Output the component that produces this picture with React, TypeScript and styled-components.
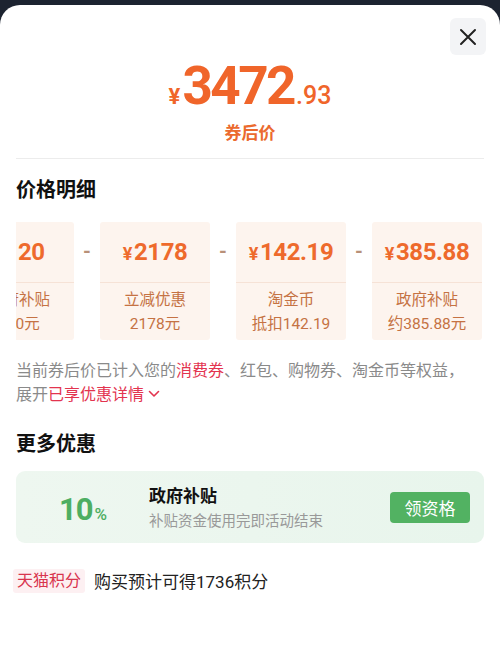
import React from 'react';
import styled, { createGlobalStyle } from 'styled-components';

const GlobalStyle = createGlobalStyle`
  html, body {
    margin: 0;
    padding: 0;
    background: #1c2330;
  }
  body {
    font-family: Roboto, "Noto Sans CJK SC", sans-serif;
  }
  * {
    box-sizing: border-box;
  }
`;

const cards = [
  { price: '120', label: '政府补贴', value: '120元' },
  { price: '2178', label: '立减优惠', value: '2178元' },
  { price: '142.19', label: '淘金币', value: '抵扣142.19' },
  { price: '385.88', label: '政府补贴', value: '约385.88元' },
];

const App = () => {
  return (
    <>
      <GlobalStyle />
      <Sheet>
        <CloseButton aria-label="close">
          <svg width="18" height="18" viewBox="0 0 18 18">
            <path d="M2 2 L16 16 M16 2 L2 16" stroke="#222" strokeWidth="2" strokeLinecap="round" />
          </svg>
        </CloseButton>
        <PriceBlock>
          <BigPrice>
            <Yen>¥</Yen>
            <Integer>3472</Integer>
            <Decimal>.93</Decimal>
          </BigPrice>
          <PriceCaption>券后价</PriceCaption>
        </PriceBlock>
        <Divider />

        <SectionTitle>价格明细</SectionTitle>
        <CardsViewport>
          <CardsRow>
            {cards.map((c, i) => (
              <React.Fragment key={i}>
                {i > 0 && <Dash>-</Dash>}
                <Card>
                  <CardPrice>
                    <CardYen>¥</CardYen>
                    {c.price}
                  </CardPrice>
                  <CardInfo>
                    <CardLine>{c.label}</CardLine>
                    <CardLine>{c.value}</CardLine>
                  </CardInfo>
                </Card>
              </React.Fragment>
            ))}
          </CardsRow>
        </CardsViewport>

        <Note>
          当前券后价已计入您的<Highlight>消费券</Highlight>、红包、购物券、淘金币等权益，展开
          <Highlight>已享优惠详情</Highlight>
          <Chevron width="12" height="8" viewBox="0 0 12 8">
            <path d="M1.5 1.5 L6 6 L10.5 1.5" fill="none" stroke="#e3344f" strokeWidth="1.6" strokeLinecap="round" strokeLinejoin="round" />
          </Chevron>
        </Note>

        <SectionTitle $top={24}>更多优惠</SectionTitle>
        <OfferCard>
          <OfferRate>
            10<Percent>%</Percent>
          </OfferRate>
          <OfferBody>
            <OfferTitle>政府补贴</OfferTitle>
            <OfferSub>补贴资金使用完即活动结束</OfferSub>
          </OfferBody>
          <OfferButton>领资格</OfferButton>
        </OfferCard>

        <PointsRow>
          <PointsTag>天猫积分</PointsTag>
          <PointsText>购买预计可得1736积分</PointsText>
        </PointsRow>
      </Sheet>
    </>
  );
};

export default App;

const Sheet = styled.div`
  position: relative;
  margin-top: 5px;
  min-height: 662px;
  background: #fff;
  border-radius: 20px 20px 0 0;
  padding: 0 16px;
  overflow: hidden;
`;
const CloseButton = styled.div`
  position: absolute;
  top: 13px;
  right: 14px;
  width: 36px;
  height: 37px;
  border-radius: 6px;
  background: #f3f4f6;
  display: flex;
  align-items: center;
  justify-content: center;
`;
const PriceBlock = styled.div`
  display: flex;
  flex-direction: column;
  align-items: center;
  padding-top: 55px;
`;
const BigPrice = styled.div`
  display: flex;
  align-items: baseline;
  color: #f0652a;
  font-family: Roboto, sans-serif;
  font-weight: 700;
  line-height: 1;
`;
const Yen = styled.span`
  font-size: 22px;
  margin-right: 2px;
`;
const Integer = styled.span`
  font-size: 53px;
  letter-spacing: -2.5px;
`;
const Decimal = styled.span`
  font-size: 25px;
  font-weight: 500;
  margin-left: 2px;
`;
const PriceCaption = styled.div`
  margin-top: 8px;
  font-size: 17px;
  font-weight: 700;
  color: #eb6a2e;
  font-family: "Noto Sans CJK SC", sans-serif;
  line-height: 22px;
`;
const Divider = styled.div`
  margin-top: 15px;
  height: 1px;
  background: #ececec;
`;
const SectionTitle = styled.div<{ $top?: number }>`
  margin-top: ${p => p.$top ?? 16}px;
  font-family: "Noto Sans CJK SC", sans-serif;
  font-size: 20px;
  font-weight: 600;
  color: #111;
  line-height: 28px;
`;
const CardsViewport = styled.div`
  margin-top: 19px;
  overflow: hidden;
`;
const CardsRow = styled.div`
  display: flex;
  margin-left: -52px;
`;
const Card = styled.div`
  flex: 0 0 110px;
  height: 118px;
  background: #fdf4ee;
  border-radius: 3px;
  display: flex;
  flex-direction: column;
`;
const CardPrice = styled.div`
  height: 61px;
  border-bottom: 1px solid #f6e2d6;
  display: flex;
  align-items: center;
  justify-content: center;
  color: #ee6a2c;
  font-family: Roboto, sans-serif;
  font-weight: 700;
  font-size: 24px;
  letter-spacing: -0.4px;
`;
const CardYen = styled.span`
  font-size: 18px;
  margin-right: 2px;
  position: relative;
  top: 1px;
`;
const CardInfo = styled.div`
  padding-top: 5px;
  display: flex;
  flex-direction: column;
  align-items: center;
`;
const CardLine = styled.div`
  font-family: Roboto, "Noto Sans CJK SC", sans-serif;
  font-size: 15.5px;
  line-height: 24px;
  color: #c57243;
  white-space: nowrap;
`;
const Dash = styled.div`
  flex: 0 0 26px;
  text-align: center;
  padding-top: 17px;
  font-size: 20px;
  font-weight: 700;
  color: #b89078;
  font-family: Roboto, sans-serif;
`;
const Note = styled.div`
  margin-top: 17px;
  padding-right: 14px;
  font-family: "Noto Sans CJK SC", sans-serif;
  font-size: 16px;
  line-height: 24px;
  color: #8a8a8a;
`;
const Highlight = styled.span`
  color: #e3344f;
`;
const Chevron = styled.svg`
  margin-left: 4px;
  vertical-align: 2px;
`;
const OfferCard = styled.div`
  margin-top: 14px;
  height: 72px;
  border-radius: 9px;
  background: linear-gradient(90deg, #eef7f0 0%, #e8f5ec 100%);
  display: flex;
  align-items: center;
  padding-right: 14px;
`;
const OfferRate = styled.div`
  flex: 0 0 133px;
  text-align: center;
  color: #4dae62;
  font-family: Roboto, sans-serif;
  font-weight: 700;
  font-size: 31px;
  letter-spacing: -1px;
  padding-top: 4px;
`;
const Percent = styled.span`
  font-size: 17px;
  font-weight: 500;
  margin-left: 2px;
`;
const OfferBody = styled.div`
  flex: 1;
  display: flex;
  flex-direction: column;
  gap: 4px;
  font-family: "Noto Sans CJK SC", sans-serif;
`;
const OfferTitle = styled.div`
  font-size: 17px;
  font-weight: 700;
  color: #111;
  line-height: 22px;
`;
const OfferSub = styled.div`
  font-size: 14.5px;
  color: #999;
  line-height: 20px;
`;
const OfferButton = styled.div`
  width: 80px;
  height: 31px;
  border-radius: 4px;
  background: #52b262;
  color: #fff;
  font-family: "Noto Sans CJK SC", sans-serif;
  font-size: 17px;
  display: flex;
  align-items: center;
  justify-content: center;
`;
const PointsRow = styled.div`
  margin-top: 25px;
  display: flex;
  align-items: center;
  gap: 9px;
  margin-left: -3px;
  font-family: Roboto, "Noto Sans CJK SC", sans-serif;
`;
const PointsTag = styled.div`
  height: 24px;
  padding: 0 4px;
  background: #fdf0f2;
  border-radius: 3px;
  color: #d8354e;
  font-size: 16px;
  line-height: 24px;
`;
const PointsText = styled.div`
  font-size: 17px;
  color: #222;
`;
